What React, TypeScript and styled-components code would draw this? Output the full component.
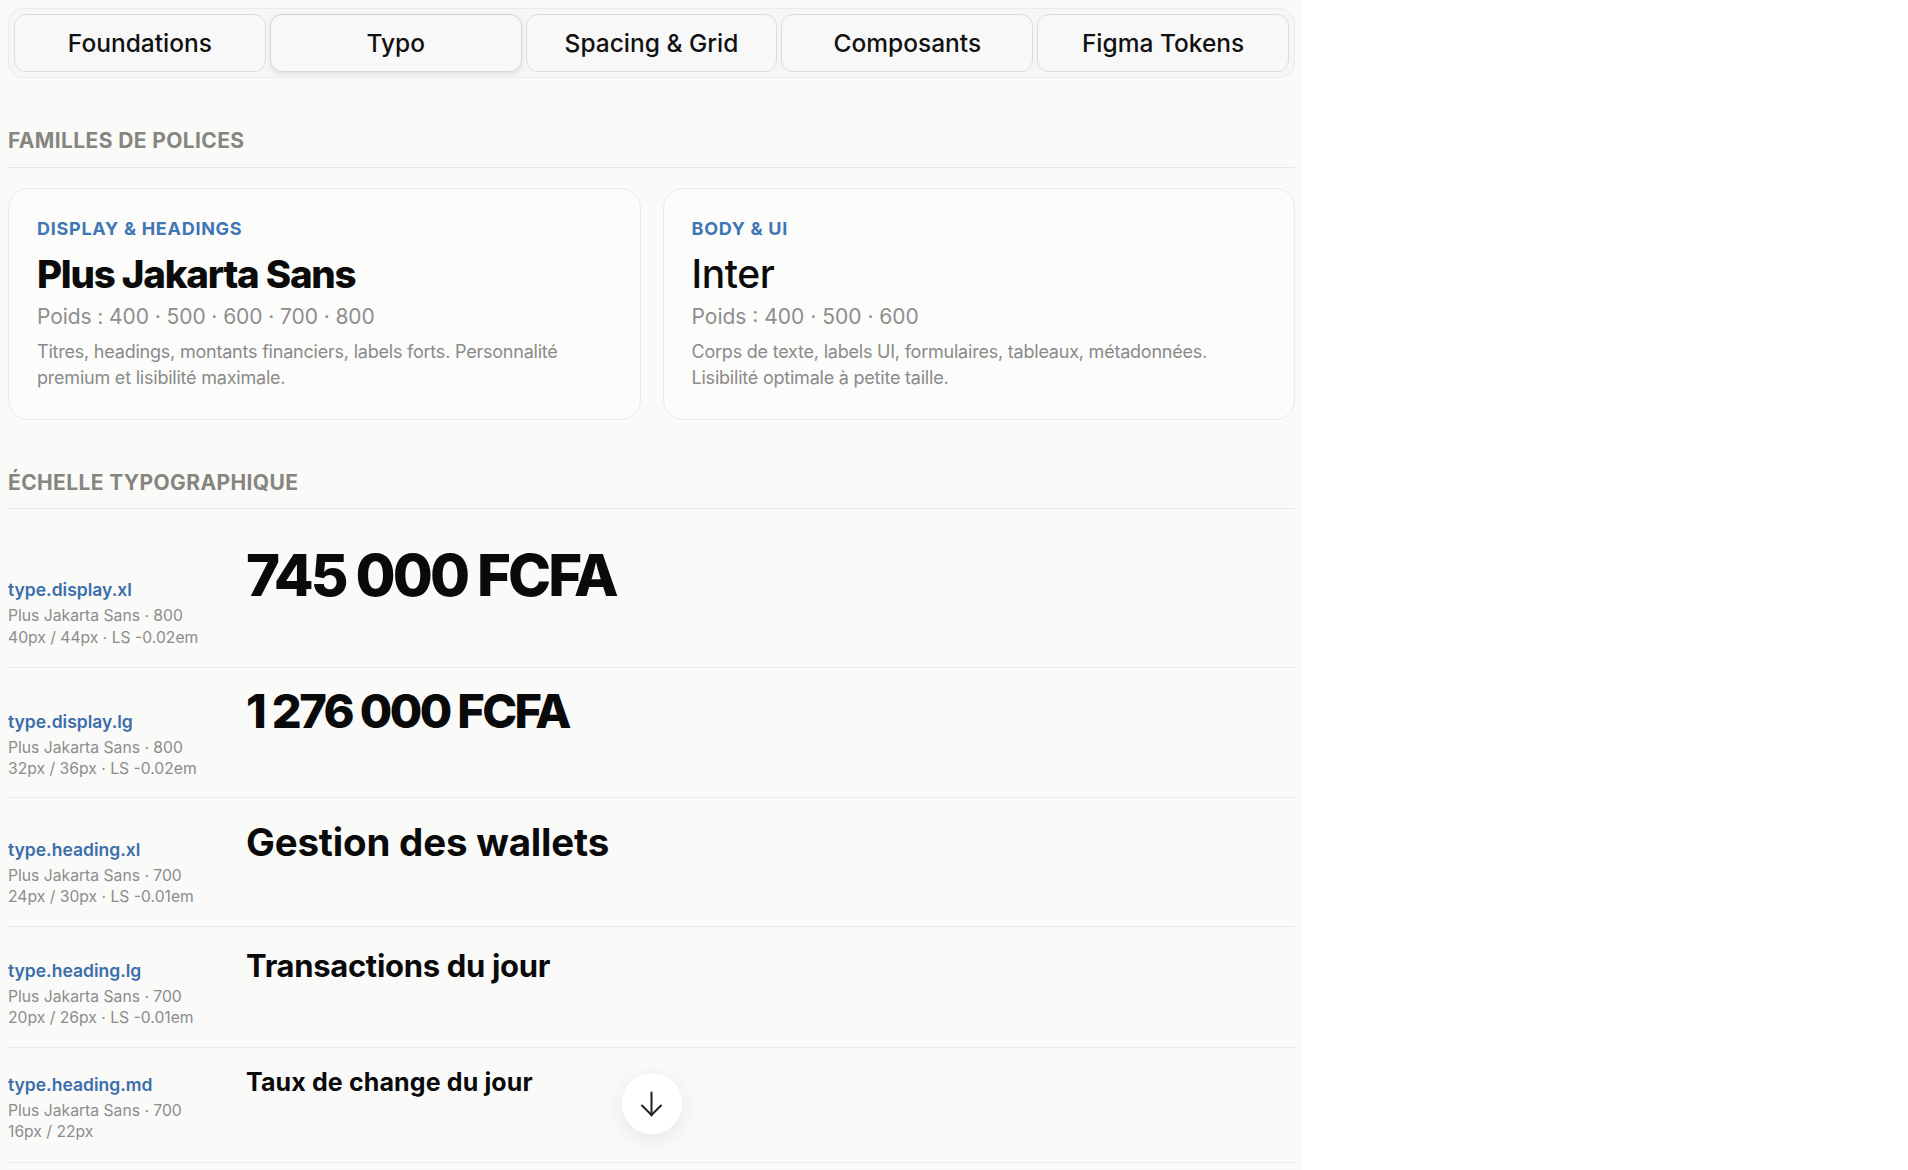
import styled, { createGlobalStyle } from 'styled-components';

const TABS = ['Foundations', 'Typo', 'Spacing & Grid', 'Composants', 'Figma Tokens'];
const ACTIVE_TAB = 'Typo';

const FAMILIES = [
  {
    kicker: 'DISPLAY & HEADINGS',
    name: 'Plus Jakarta Sans',
    weights: 'Poids : 400 · 500 · 600 · 700 · 800',
    desc: 'Titres, headings, montants financiers, labels forts. Personnalité premium et lisibilité maximale.',
    heavy: true,
  },
  {
    kicker: 'BODY & UI',
    name: 'Inter',
    weights: 'Poids : 400 · 500 · 600',
    desc: 'Corps de texte, labels UI, formulaires, tableaux, métadonnées. Lisibilité optimale à petite taille.',
    heavy: false,
  },
];

// pad = [top, bottom] in px, tuned per row so baselines land where the design has them
const SCALE = [
  {
    token: 'type.display.xl',
    meta: ['Plus Jakarta Sans · 800', '40px / 44px · LS -0.02em'],
    sample: '745 000 FCFA',
    size: 58,
    lh: 66,
    weight: 800,
    ls: -0.05,
    pad: [33.4, 18.2],
  },
  {
    token: 'type.display.lg',
    meta: ['Plus Jakarta Sans · 800', '32px / 36px · LS -0.02em'],
    sample: '1 276 000 FCFA',
    size: 47,
    lh: 54,
    weight: 800,
    ls: -0.055,
    pad: [16, 17.8],
  },
  {
    token: 'type.heading.xl',
    meta: ['Plus Jakarta Sans · 700', '24px / 30px · LS -0.01em'],
    sample: 'Gestion des wallets',
    size: 38.5,
    lh: 45,
    weight: 700,
    ls: -0.005,
    pad: [21.2, 18],
  },
  {
    token: 'type.heading.lg',
    meta: ['Plus Jakarta Sans · 700', '20px / 26px · LS -0.01em'],
    sample: 'Transactions du jour',
    size: 31,
    lh: 39,
    weight: 700,
    ls: -0.01,
    pad: [19.3, 17.7],
  },
  {
    token: 'type.heading.md',
    meta: ['Plus Jakarta Sans · 700', '16px / 22px'],
    sample: 'Taux de change du jour',
    size: 25,
    lh: 33,
    weight: 700,
    ls: 0.005,
    pad: [18.3, 19.4],
  },
];

function ArrowDownIcon() {
  return (
    <svg width="24" height="26" viewBox="0 0 24 26" fill="none" stroke="#1f1f1f" strokeWidth="2" strokeLinecap="round" strokeLinejoin="round">
      <path d="M12 1.5V24.5" />
      <path d="M2.5 14.5L12 24l9.5-9.5" />
    </svg>
  );
}

export default function App() {
  return (
    <>
      <GlobalStyle />
      <Panel>
        <TabBar>
          {TABS.map((tab) => (
            <Tab key={tab} $active={tab === ACTIVE_TAB}>
              {tab}
            </Tab>
          ))}
        </TabBar>

        <SectionTitle>FAMILLES DE POLICES</SectionTitle>
        <CardGrid>
          {FAMILIES.map((family) => (
            <FamilyCard key={family.name}>
              <Kicker>{family.kicker}</Kicker>
              <FamilyName $heavy={family.heavy}>{family.name}</FamilyName>
              <Weights $heavy={family.heavy}>{family.weights}</Weights>
              <Description>{family.desc}</Description>
            </FamilyCard>
          ))}
        </CardGrid>

        <SectionTitle>ÉCHELLE TYPOGRAPHIQUE</SectionTitle>
        <ScaleList>
          {SCALE.map((row) => (
            <ScaleRow key={row.token} $padTop={row.pad[0]} $padBottom={row.pad[1]}>
              <TokenInfo>
                <TokenName>{row.token}</TokenName>
                <TokenMeta>
                  {row.meta.map((line) => (
                    <div key={line}>{line}</div>
                  ))}
                </TokenMeta>
              </TokenInfo>
              <Sample $size={row.size} $lh={row.lh} $weight={row.weight} $ls={row.ls}>
                {row.sample}
              </Sample>
            </ScaleRow>
          ))}
        </ScaleList>

        <ScrollButton aria-label="Défiler vers le bas">
          <ArrowDownIcon />
        </ScrollButton>
      </Panel>
    </>
  );
}

const GlobalStyle = createGlobalStyle`
  * { box-sizing: border-box; }
  body {
    margin: 0;
    background: #ffffff;
    font-family: Inter, 'Noto Sans', sans-serif;
    color: #0b0b0b;
  }
`;

const Panel = styled.div`
  position: relative;
  width: 1303px;
  min-height: 100vh;
  padding: 8px;
  background: #fafaf9;
`;

const TabBar = styled.div`
  display: flex;
  gap: 4px;
  padding: 5px;
  border: 1px solid #ebebe9;
  border-radius: 15px;
  background: #f6f6f5;
`;

const Tab = styled.button<{ $active: boolean }>`
  flex: 1;
  height: 58px;
  border: 1px solid ${(p) => (p.$active ? '#d6d6d6' : '#dcdcdc')};
  border-radius: 12px;
  background: #f8f8f8;
  font-family: Inter, sans-serif;
  font-size: 24.5px;
  font-weight: 500;
  color: #111111;
  box-shadow: ${(p) => (p.$active ? '0 2px 5px rgba(0, 0, 0, 0.09)' : 'none')};
  cursor: pointer;
`;

const SectionTitle = styled.h2`
  margin: 49px 0 0;
  padding-bottom: 11.5px;
  border-bottom: 1px solid #e8e7e5;
  font-family: Inter, sans-serif;
  font-size: 21px;
  font-weight: 700;
  line-height: 28px;
  letter-spacing: 0.018em;
  color: #878580;
`;

const CardGrid = styled.div`
  display: grid;
  grid-template-columns: 1fr 1fr;
  gap: 22px;
  margin-top: 20.5px;
`;

const FamilyCard = styled.div`
  padding: 28.5px 28px 28px;
  border: 1px solid #ebeae8;
  border-radius: 20px;
  background: #fcfcfb;
`;

const Kicker = styled.div`
  font-size: 18px;
  font-weight: 700;
  line-height: 22px;
  letter-spacing: 0.04em;
  color: #3f76b5;
`;

const FamilyName = styled.div<{ $heavy: boolean }>`
  margin-top: 10px;
  font-size: ${(p) => (p.$heavy ? '38.5px' : '39px')};
  font-weight: ${(p) => (p.$heavy ? 800 : 500)};
  line-height: 48px;
  letter-spacing: ${(p) => (p.$heavy ? '-0.032em' : '-0.01em')};
  color: #0b0b0b;
`;

const Weights = styled.div<{ $heavy: boolean }>`
  margin-top: 5.5px;
  font-size: 21px;
  line-height: 28px;
  letter-spacing: ${(p) => (p.$heavy ? '-0.004em' : '0')};
  color: #8e8e8e;
`;

const Description = styled.p`
  margin: 7.6px 0 0;
  font-size: 18px;
  line-height: 26px;
  letter-spacing: -0.012em;
  color: #8a8a8a;
`;

const ScaleList = styled.div``;

const ScaleRow = styled.div<{ $padTop: number; $padBottom: number }>`
  display: flex;
  align-items: baseline;
  padding: ${(p) => p.$padTop}px 0 ${(p) => p.$padBottom}px;
  border-bottom: 1px solid #e9e8e6;
`;

const TokenInfo = styled.div`
  flex: 0 0 238px;
`;

const TokenName = styled.div`
  font-size: 17.5px;
  font-weight: 600;
  line-height: 24px;
  color: #3b6eaa;
`;

const TokenMeta = styled.div`
  margin-top: 3px;
  font-size: 15.7px;
  line-height: 21.5px;
  color: #8c8c8c;
`;

const Sample = styled.div<{ $size: number; $lh: number; $weight: number; $ls: number }>`
  font-size: ${(p) => p.$size}px;
  line-height: ${(p) => p.$lh}px;
  font-weight: ${(p) => p.$weight};
  letter-spacing: ${(p) => p.$ls}em;
  color: #0a0a0a;
  white-space: nowrap;
`;

const ScrollButton = styled.button`
  position: absolute;
  left: 50%;
  bottom: 36px;
  transform: translateX(-50%);
  display: flex;
  align-items: center;
  justify-content: center;
  width: 63px;
  height: 63px;
  padding: 0;
  border: 1px solid #f1f1f0;
  border-radius: 50%;
  background: #ffffff;
  box-shadow: 0 5px 20px rgba(0, 0, 0, 0.08);
  cursor: pointer;
`;
